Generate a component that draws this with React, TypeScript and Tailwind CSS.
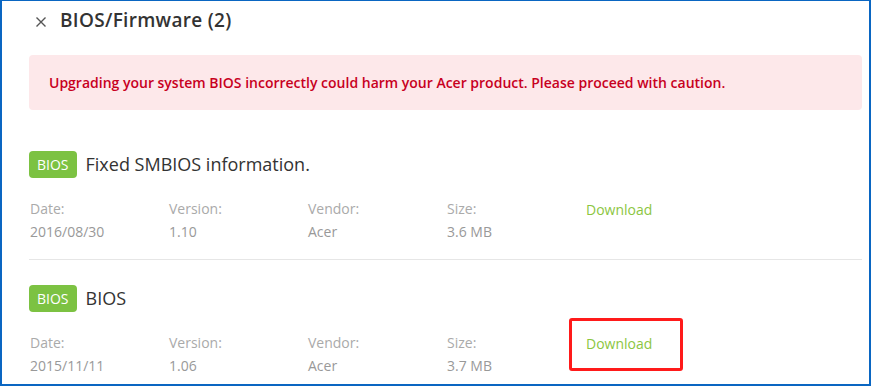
import React from 'react';

interface BiosItem {
  title: string;
  date: string;
  version: string;
  vendor: string;
  size: string;
  highlight?: boolean;
}

const items: BiosItem[] = [
  { title: 'Fixed SMBIOS information.', date: '2016/08/30', version: '1.10', vendor: 'Acer', size: '3.6 MB' },
  { title: 'BIOS', date: '2015/11/11', version: '1.06', vendor: 'Acer', size: '3.7 MB', highlight: true },
];

function Field({ label, value }: { label: string; value: string }) {
  return (
    <div className="w-[139px] shrink-0">
      <div className="text-[14px] leading-[23px] text-[#aaa]">{label}</div>
      <div className="text-[14px] leading-[23px] text-[#999]">{value}</div>
    </div>
  );
}

function BiosRow({ item, first, last }: { item: BiosItem; first?: boolean; last?: boolean }) {
  return (
    <div
      className={`mr-[7px] ml-[27px] pb-[16px] ${first ? 'pt-[41px]' : 'pt-[25px]'} ${
        last ? '' : 'border-b border-[#e6e6e6]'
      }`}
    >
      <div className="flex items-center gap-[9px]">
        <span className="rounded-[4px] bg-[#7cc242] px-[8px] text-[14px] leading-[27px] text-white">BIOS</span>
        <span className="text-[18px] font-medium text-[#333]">{item.title}</span>
      </div>
      <div className="mt-[19px] flex pl-px">
        <Field label="Date:" value={item.date} />
        <Field label="Version:" value={item.version} />
        <Field label="Vendor:" value={item.vendor} />
        <Field label="Size:" value={item.size} />
        <div className="relative">
          <a className="text-[14px] leading-[23px] text-[#8cc63f]">Download</a>
          {item.highlight && (
            <div className="absolute left-[-17px] top-[-13px] h-[53px] w-[114px] rounded-[3px] border-[3px] border-[#ff1a1a]" />
          )}
        </div>
      </div>
    </div>
  );
}

export default function App() {
  return (
    <div
      className="relative h-[386px] w-[871px] overflow-hidden border-x-2 border-t border-b-2 border-[#0a66c2] bg-white"
      style={{ fontFamily: '"Open Sans", "Noto Sans", sans-serif' }}
    >
      <div className="flex h-[38px] items-center pl-[33px]">
        <svg width="12" height="12" viewBox="0 0 12 12" className="mt-[3px]">
          <path d="M1.5 1.5 L10.5 10.5 M10.5 1.5 L1.5 10.5" stroke="#555" strokeWidth="1.4" />
        </svg>
        <span className="ml-[13px] text-[19px] font-semibold tracking-[0.3px] text-[#333]">BIOS/Firmware (2)</span>
      </div>

      <div className="mr-[7px] ml-[27px] mt-[16px] flex h-[55px] items-center rounded-[4px] bg-[#fde8ea] pl-[20px]">
        <p className="text-[14px] font-semibold text-[#c8001e]">
          Upgrading your system BIOS incorrectly could harm your Acer product. Please proceed with caution.
        </p>
      </div>

      {items.map((item, i) => (
        <BiosRow key={item.date} item={item} first={i === 0} last={i === items.length - 1} />
      ))}
    </div>
  );
}
